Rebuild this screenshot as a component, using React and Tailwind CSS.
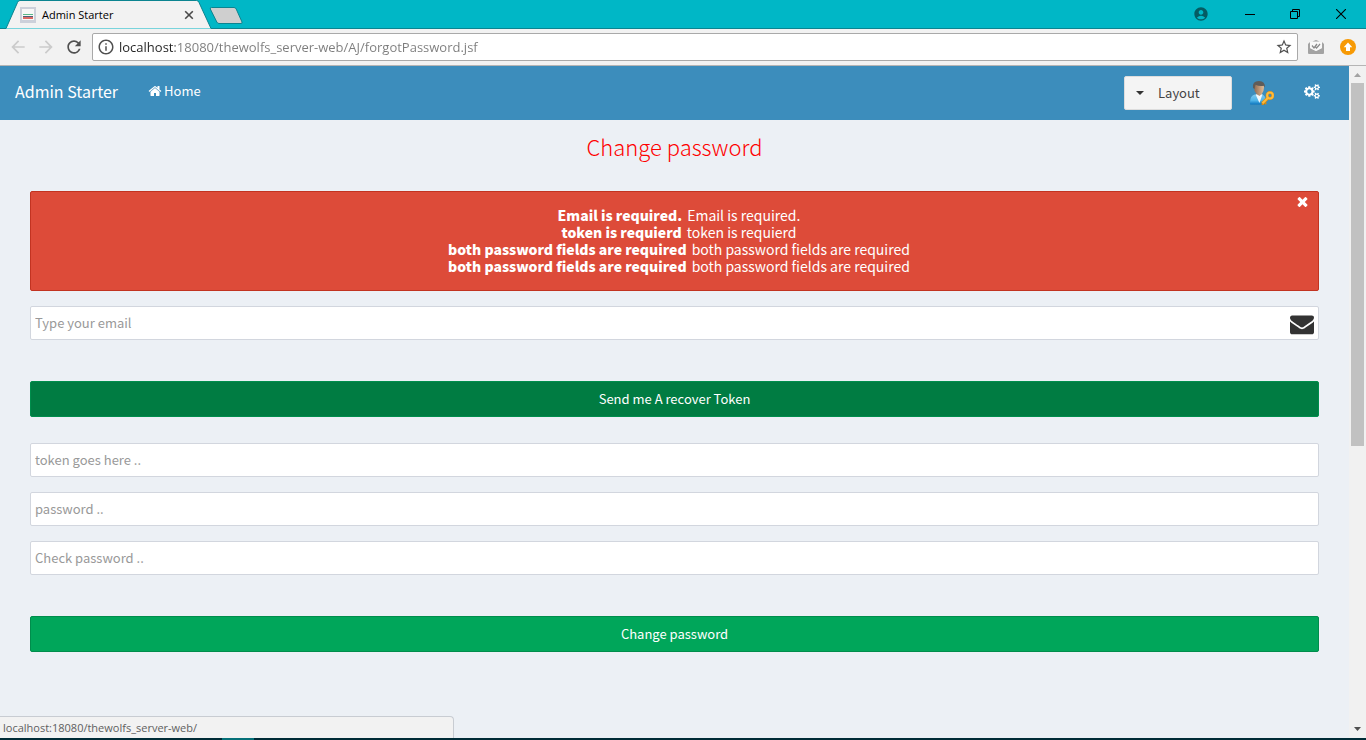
import { MdAccountCircle, MdArrowBack, MdArrowForward, MdInfoOutline, MdRefresh, MdStarBorder } from 'react-icons/md';

const HOME =
  'M1472 992v480q0 26-19 45t-45 19h-384v-384h-256v384h-384q-26 0-45-19t-19-45v-480q0-1 .5-3t.5-3l575-474 575 474q1 2 1 6zm223-69l-62 74q-8 9-21 11h-3q-13 0-21-7l-692-577-692 577q-12 8-24 7-13-2-21-11l-62-74q-8-10-7-23.5t11-21.5l719-599q32-26 76-26t76 26l244 204v-195q0-14 9-23t23-9h192q14 0 23 9t9 23v408l219 182q10 8 11 21.5t-7 23.5z';
const ENVELOPE =
  'M1792 710v794q0 66-47 113t-113 47h-1472q-66 0-113-47t-47-113v-794q44 49 101 87 362 246 497 345 57 42 92.5 65.5t94.5 48 110 24.5h2q51 0 110-24.5t94.5-48 92.5-65.5q170-123 498-345 57-39 100-87zm0-294q0 79-49 151t-122 123q-376 261-468 325-10 7-42.5 31t-54 38.5-52 32.5-57.5 27-50 9h-2q-23 0-50-9t-57.5-27-52-32.5-54-38.5-42.5-31q-91-64-262-182.5t-205-142.5q-62-42-117-115.5t-55-136.5q0-78 41.5-130t118.5-52h1472q65 0 112.5 47t47.5 113z';
const TIMES =
  'M1490 1322q0 40-28 68l-136 136q-28 28-68 28t-68-28l-294-294-294 294q-28 28-68 28t-68-28l-136-136q-28-28-28-68t28-68l294-294-294-294q-28-28-28-68t28-68l136-136q28-28 68-28t68 28l294 294 294-294q28-28 68-28t68 28l136 136q28 28 28 68t-28 68l-294 294 294 294q28 28 28 68z';
const COGS =
  'M896 896q0-106-75-181t-181-75-181 75-75 181 75 181 181 75 181-75 75-181zm768 512q0-52-38-90t-90-38-90 38-38 90q0 53 37.5 90.5t90.5 37.5 90.5-37.5 37.5-90.5zm0-1024q0-52-38-90t-90-38-90 38-38 90q0 53 37.5 90.5t90.5 37.5 90.5-37.5 37.5-90.5zm-384 421v185q0 10-7 19.5t-16 10.5l-155 24q-11 35-32 76 34 48 90 115 7 11 7 20 0 12-7 19-23 30-82.5 89.5t-78.5 59.5q-11 0-21-7l-115-90q-37 19-77 31-11 108-23 155-7 24-30 24h-186q-11 0-20-7.5t-10-17.5l-23-153q-34-10-75-31l-118 89q-7 7-20 7-11 0-21-8-144-133-144-160 0-9 7-19 10-14 41-53t47-61q-23-44-35-82l-152-24q-10-1-17-9.5t-7-19.5v-185q0-10 7-19.5t16-10.5l155-24q11-35 32-76-34-48-90-115-7-11-7-20 0-12 7-20 22-30 82-89t79-59q11 0 21 7l115 90q34-18 77-32 11-108 23-154 7-24 30-24h186q11 0 20 7.5t10 17.5l23 153q34 10 75 31l118-89q8-7 20-7 11 0 21 8 144 133 144 160 0 8-7 19-12 16-42 54t-45 60q23 48 34 82l152 23q10 2 17 10.5t7 19.5zm640 533v140q0 16-149 31-12 27-30 52 51 113 51 138 0 4-4 7-122 71-124 71-8 0-46-47t-52-68q-20 2-30 2t-30-2q-14 21-52 68t-46 47q-2 0-124-71-4-3-4-7 0-25 51-138-18-25-30-52-149-15-149-31v-140q0-16 149-31 13-29 30-52-51-113-51-138 0-4 4-7 4-2 35-20t59-34 30-16q8 0 46 46.5t52 67.5q20-2 30-2t30 2q51-71 92-112l6-2q4 0 124 70 4 3 4 7 0 25-51 138 17 23 30 52 149 15 149 31zm0-1024v140q0 16-149 31-12 27-30 52 51 113 51 138 0 4-4 7-122 71-124 71-8 0-46-47t-52-68q-20 2-30 2t-30-2q-14 21-52 68t-46 47q-2 0-124-71-4-3-4-7 0-25 51-138-18-25-30-52-149-15-149-31v-140q0-16 149-31 13-29 30-52-51-113-51-138 0-4 4-7 4-2 35-20t59-34 30-16q8 0 46 46.5t52 67.5q20-2 30-2t30 2q51-71 92-112l6-2q4 0 124 70 4 3 4 7 0 25-51 138 17 23 30 52 149 15 149 31z';

function Glyph({ d, className, box = '0 0 1792 1792' }) {
  return (
    <svg viewBox={box} className={className} fill="currentColor" aria-hidden="true">
      <path d={d} />
    </svg>
  );
}

function TabStrip() {
  return (
    <div className="flex h-[29px] shrink-0 justify-between bg-[#00b7c6]">
      <div className="flex grow">
        <div className="relative h-[29px] w-[250px] shrink-0">
          <svg viewBox="0 0 250 29" className="absolute inset-0 h-[29px] w-[250px]" aria-hidden="true">
            <path d="M0 28.5H6L17.5 2.500Q18.200 .5 20 .5H196.500Q198.300 .5 199 2.500L211 28.500H250" fill="#f2f2f2" stroke="#0b8490" />
            <path d="M212 28H250V29H212Z" fill="#0b8490" />
            <path d="M211.500 7.500H234Q235.500 7.500 236.200 9L242 22Q242.500 23.500 241 23.500H219Q217.500 23.500 216.800 22L210.300 9Q209.800 7.500 211.500 7.500Z" fill="#cfcfcf" stroke="#0b8490" />
          </svg>
          <div className="relative flex h-[29px] w-[198px] items-center pl-5">
            <svg viewBox="0 0 16 16" className="h-4 w-4" aria-hidden="true">
              <path fill="#ccd0da" d="M0 0h16v16H0z" />
              <path fill="#f7f7f7" d="M2 2h12v11H2z" />
              <path fill="#58b98a" d="M3 7h10v1H3z" />
              <path fill="#4f5f78" d="M3 9h10v1H3z" />
              <path fill="#dc6a66" d="M3 10h10v2H3z" />
            </svg>
            <span className="ml-[6px] grow text-[11px] leading-4 text-black">Admin Starter</span>
            <button type="button" aria-label="Close tab" className="mr-1 text-[#4a4a4a]">
              <svg viewBox="0 0 10 10" className="h-[10px] w-[10px]" aria-hidden="true">
                <path d="M1.200 1.200L8.800 8.800M8.800 1.200L1.200 8.800" stroke="currentColor" strokeWidth="1.600" />
              </svg>
            </button>
          </div>
        </div>
        <div className="grow border-b border-[#0b8490]" />
      </div>
      <div className="flex items-center border-b border-[#0b8490] pr-5 pb-px text-black">
        <button type="button" aria-label="Profile" className="mr-9 text-[#045c63]">
          <MdAccountCircle className="h-4 w-4" />
        </button>
        <button type="button" aria-label="Minimize" className="mr-[35px]">
          <svg viewBox="0 0 10 10" className="h-[10px] w-[10px]" aria-hidden="true">
            <path d="M0 5.500H10" stroke="currentColor" />
          </svg>
        </button>
        <button type="button" aria-label="Restore" className="mr-9">
          <svg viewBox="0 0 10 10" className="h-[10px] w-[10px]" fill="none" aria-hidden="true">
            <path d="M.5 2.500H7.500V9.500H.5ZM2.500 2.500V.5H9.500V7.500H7.500" stroke="currentColor" />
          </svg>
        </button>
        <button type="button" aria-label="Close">
          <svg viewBox="0 0 10 10" className="h-[10px] w-[10px]" aria-hidden="true">
            <path d="M0 0L10 10M10 0L0 10" stroke="currentColor" strokeWidth="1.100" />
          </svg>
        </button>
      </div>
    </div>
  );
}

function Toolbar() {
  return (
    <div className="flex h-[37px] shrink-0 items-center border-b border-[#b5b5b5] bg-[#f2f2f2] pr-[10px] pl-2">
      <button type="button" aria-label="Back" className="text-[#cbcbcb]">
        <MdArrowBack className="h-5 w-5" />
      </button>
      <button type="button" aria-label="Forward" className="ml-2 text-[#cbcbcb]">
        <MdArrowForward className="h-5 w-5" />
      </button>
      <button type="button" aria-label="Reload" className="ml-2 text-[#505050]">
        <MdRefresh className="h-5 w-5" />
      </button>
      <div className="ml-2 flex h-7 grow items-center rounded-xs border border-[#a9a9a9] bg-white px-1">
        <MdInfoOutline className="h-[18px] w-[18px] shrink-0 text-[#505050]" />
        <input
          type="text"
          aria-label="Address"
          defaultValue="localhost:18080/thewolfs_server-web/AJ/forgotPassword.jsf"
          className="ml-1 min-w-0 grow bg-[linear-gradient(to_right,#222222_56px,#7c7c7c_56px)] bg-clip-text text-[13px] leading-5 text-transparent caret-black outline-none"
        />
        <button type="button" aria-label="Bookmark this page" className="text-[#505050]">
          <MdStarBorder className="h-[18px] w-[18px]" />
        </button>
      </div>
      <button type="button" aria-label="Mail checker" className="ml-[10px]">
        <svg viewBox="0 0 16 14" className="h-[14px] w-4" aria-hidden="true">
          <path d="M0 4L2 2V8L8 11L14 8V2L16 4V13Q16 14 15 14H1Q0 14 0 13Z" fill="#a3a3a3" />
          <path d="M4.500 1.500L8 0L11.500 1.500Z" fill="#a3a3a3" />
          <path d="M2 2H14V8L8 11L2 8Z" fill="#f8f8f8" />
          <path d="M4 5.500L6 8L9 4M7.500 7L8.500 8L12 4" fill="none" stroke="#8a8a8a" strokeWidth="1.300" />
        </svg>
      </button>
      <button type="button" aria-label="Update available" className="ml-4">
        <svg viewBox="0 0 16 16" className="h-4 w-4" aria-hidden="true">
          <circle cx="8" cy="8" r="8" fill="#f79a05" />
          <path d="M8 3.500L12.300 8.200H10V12H6V8.200H3.700Z" fill="#fff" />
        </svg>
      </button>
    </div>
  );
}

function UserKeyIcon() {
  return (
    <svg viewBox="0 0 24 24" className="h-6 w-6" aria-hidden="true">
      <defs>
        <linearGradient id="shirt" x1="0" y1="0" x2="0" y2="1">
          <stop offset="0" stopColor="#7cc8ee" />
          <stop offset=".6" stopColor="#4fb4e8" />
          <stop offset="1" stopColor="#0b74bd" />
        </linearGradient>
        <linearGradient id="face" x1="0" y1="0" x2="1" y2="0">
          <stop offset="0" stopColor="#8f6a50" />
          <stop offset="1" stopColor="#e3bd98" />
        </linearGradient>
      </defs>
      <path d="M0 23Q-.3 15 4.500 13.500L9 15L12.500 13.500Q15.500 15 16 19L15 23.500H2Q0 23.500 0 23Z" fill="url(#shirt)" />
      <path d="M5.500 13.300L9.500 22L12.500 13.300Z" fill="#f4f9fc" />
      <path d="M4 6Q4 1 9 1T14 6Q14 10.500 11.800 13L9.500 15L6.500 13Q4 10.500 4 6Z" fill="url(#face)" />
      <path d="M3 7Q2 0 9 0Q15.500 0 14.700 6.500L13.500 4.800Q9 5.500 5.500 3.800L4.500 8Z" fill="#5f5c59" />
      <circle cx="20" cy="14.500" r="2.900" fill="none" stroke="#d58a12" strokeWidth="3" />
      <path d="M17.800 17L12.300 22.500" stroke="#d58a12" strokeWidth="3.200" />
      <path d="M14 20.500L16 23M12 22.200L13.500 24" stroke="#d58a12" strokeWidth="2.200" />
      <circle cx="20" cy="14.500" r="2.900" fill="none" stroke="#fdbb3c" strokeWidth="2" />
      <path d="M17.800 17L12.500 22.300" stroke="#fdbb3c" strokeWidth="2" />
    </svg>
  );
}

function NavBar() {
  return (
    <header className="flex h-[54px] items-center bg-[#3c8dbc] pr-[29px] pl-[15px] text-white">
      <a href="#brand" className="-mt-1 text-[16px] leading-6">Admin Starter</a>
      <a href="#home" className="-mt-1 ml-[30px] flex items-center gap-[2px] text-[13px] leading-5">
        <Glyph d={HOME} className="h-[14px] w-[14px]" />
        Home
      </a>
      <button
        type="button"
        className="ml-auto flex h-[34px] w-[108px] items-center rounded-xs border border-[#dddddd] bg-[#f4f4f4] pl-[11px] text-[13px] text-[#444444]"
      >
        <svg viewBox="0 0 8 4" className="mr-[14px] h-1 w-2" aria-hidden="true">
          <path d="M0 0H8L4 4Z" fill="#333" />
        </svg>
        Layout
      </button>
      <a href="#account" aria-label="Account" className="ml-[18px]">
        <UserKeyIcon />
      </a>
      <button type="button" aria-label="Settings" className="-mt-1 ml-[30px]">
        <Glyph d={COGS} box="0 0 1920 1792" className="h-[15px] w-4" />
      </button>
    </header>
  );
}

const messages = [
  ['Email is required.', 'Email is required.'],
  ['token is requierd', 'token is requierd'],
  ['both password fields are required', 'both password fields are required'],
  ['both password fields are required', 'both password fields are required'],
];

function Field({ type, label, className = '' }) {
  return (
    <input
      type={type}
      aria-label={label}
      placeholder={label}
      className={`block h-[34px] w-full rounded-xs border border-[#d2d6de] bg-white px-1 pb-[2px] text-[13px] text-[#555555] outline-none placeholder:text-[#999999] ${className}`}
    />
  );
}

function ForgotPassword() {
  return (
    <form className="px-[30px] pt-3" onSubmit={(e) => e.preventDefault()}>
      <h1 className="text-center text-[22px] leading-7 font-light text-[#ff0000]">Change password</h1>
      <div role="alert" className="relative mt-[31px] rounded-xs border border-[#c23321] bg-[#dd4b39] px-4 py-[15px] text-white">
        <ul className="pl-[9px] text-center text-[14px] leading-[17px]">
          {messages.map(([summary, detail], i) => (
            <li key={i}>
              <strong className="mr-[5px] font-black">{summary}</strong>
              <span>{detail}</span>
            </li>
          ))}
        </ul>
        <button type="button" aria-label="Dismiss" className="absolute top-[2px] right-2">
          <Glyph d={TIMES} className="h-[15px] w-[15px]" />
        </button>
      </div>
      <div className="relative mt-[15px]">
        <Field type="email" label="Type your email" className="pr-9" />
        <Glyph d={ENVELOPE} className="absolute top-[6px] right-[5px] h-6 w-6 text-[#333333]" />
      </div>
      <button type="button" className="mt-[41px] h-9 w-full rounded-xs border border-[#008d4c] bg-[#007c42] text-[13px] text-white">
        Send me A recover Token
      </button>
      <div className="mt-[26px] flex flex-col gap-[15px]">
        <Field type="text" label="token goes here .." />
        <Field type="password" label="password .." />
        <Field type="password" label="Check password .." />
      </div>
      <button type="submit" className="mt-[41px] h-9 w-full rounded-xs border border-[#008d4c] bg-[#00a65a] text-[13px] text-white">
        Change password
      </button>
    </form>
  );
}

function ScrollBar() {
  return (
    <div className="flex w-[17px] shrink-0 flex-col items-center bg-[#f1f1f1]" aria-hidden="true">
      <svg viewBox="0 0 17 17" className="h-[17px] w-[17px]">
        <path d="M5 11H12L8.500 7Z" fill="#a3a3a3" />
      </svg>
      <div className="h-[363px] w-[13px] bg-[#c1c1c1]" />
      <svg viewBox="0 0 17 17" className="mt-auto h-[17px] w-[17px]">
        <path d="M5 6H12L8.500 10Z" fill="#505050" />
      </svg>
    </div>
  );
}

export default function App() {
  return (
    <div className="flex h-screen flex-col overflow-hidden font-['Open_Sans',sans-serif]">
      <TabStrip />
      <Toolbar />
      <div className="relative flex min-h-0 grow">
        <main className="min-w-0 grow overflow-hidden bg-[#ecf0f5] font-['Noto_Sans_CJK_SC',sans-serif]">
          <NavBar />
          <ForgotPassword />
        </main>
        <ScrollBar />
        <div className="absolute bottom-0 left-0 h-[22px] w-[454px] rounded-tr-sm border-t border-r border-[#c8ccd2] bg-[#f2f2f2] pl-[3px] text-[11px] leading-[22px] text-[#5f5f5f]">
          localhost:18080/thewolfs_server-web/
        </div>
      </div>
      <div className="h-[2px] shrink-0 bg-[#002b36] pl-[222px]">
        <div className="h-[2px] w-8 bg-[#067078]" />
      </div>
    </div>
  );
}
